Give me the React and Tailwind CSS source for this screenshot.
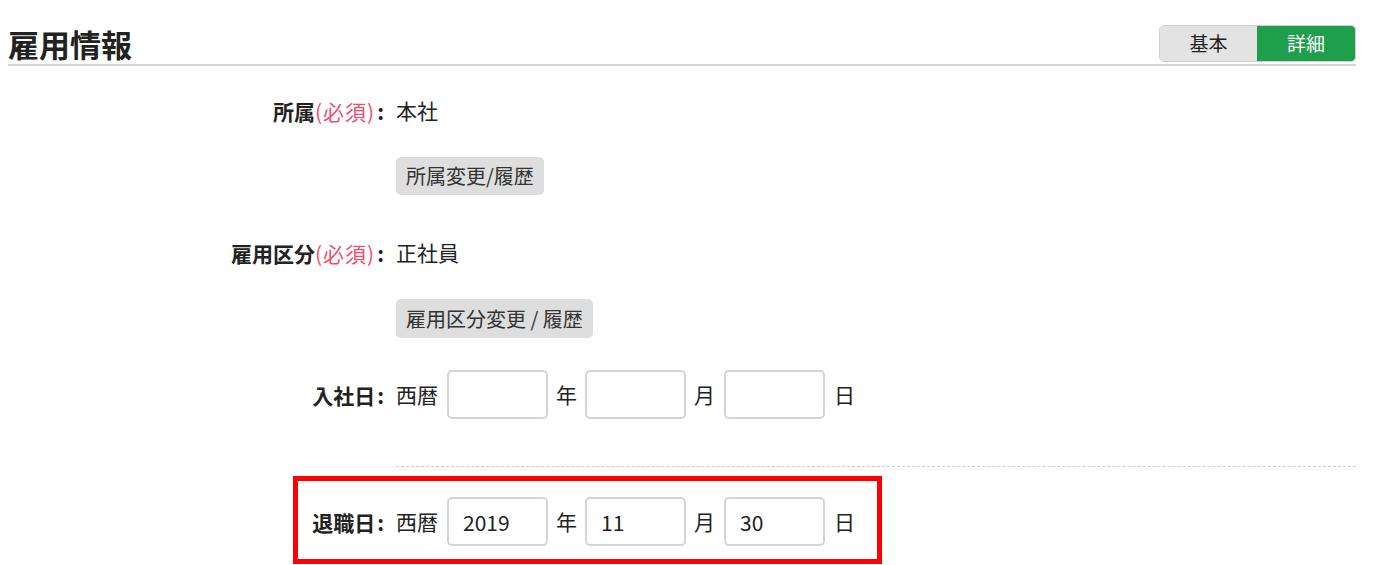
export default function App() {
  const font = { fontFamily: '"Noto Sans CJK JP", "Noto Sans", sans-serif' };
  const Label = ({ children, req }) => (
    <div className="w-[376px] shrink-0 text-right font-bold text-[21px] leading-[26px] text-[#222]">
      {children}
      {req && <span className="font-normal text-[#f0506e] tracking-[1px]">(必須)</span>}
      <span className="ml-[2px]">:</span>
    </div>
  );
  const Input = ({ value }) => (
    <input
      readOnly
      value={value || ""}
      className="w-[101px] h-[49px] rounded-[5px] border-2 border-[#d4d4d4] px-[14px] text-[21px] text-[#222] outline-none bg-white"
    />
  );
  const DateRow = ({ label, y, m, d }) => (
    <div className="flex items-center gap-3 h-[49px]">
      <Label>{label}</Label>
      <div className="flex items-center text-[21px] text-[#222]">
        <span className="mr-[9px]">西暦</span>
        <Input value={y} />
        <span className="mx-[8px]">年</span>
        <Input value={m} />
        <span className="ml-[8px] mr-[9px]">月</span>
        <Input value={d} />
        <span className="ml-[9px]">日</span>
      </div>
    </div>
  );
  return (
    <div style={font} className="w-[1390px] h-[565px] bg-white pl-2 pr-[34px] pt-[25px] overflow-hidden relative">
      <div className="flex items-end justify-between border-b-2 border-[#d6d6d6] pb-[2px]">
        <h1 className="text-[31px] font-bold leading-[37px] text-[#222]">雇用情報</h1>
        <div className="flex h-[37px] rounded-[5px] border border-[#cfcfcf] overflow-hidden text-[19px]">
          <div className="w-[97px] flex items-center justify-center bg-[#e3e3e3] text-[#222]">基本</div>
          <div className="w-[98px] flex items-center justify-center bg-[#1f9e4b] text-white">詳細</div>
        </div>
      </div>

      <div className="mt-[32px] flex items-center gap-3 h-[26px]">
        <Label req>所属</Label>
        <div className="text-[21px] text-[#222]">本社</div>
      </div>
      <div className="mt-[33px] ml-[388px]">
        <button className="h-[38px] px-[10px] rounded-[5px] bg-[#dedede] text-[20px] text-[#333]">所属変更/履歴</button>
      </div>

      <div className="mt-[45px] flex items-center gap-3 h-[26px]">
        <Label req>雇用区分</Label>
        <div className="text-[21px] text-[#222]">正社員</div>
      </div>
      <div className="mt-[33px] ml-[388px]">
        <button className="h-[39px] px-[10px] rounded-[5px] bg-[#dedede] text-[20px] text-[#333]">雇用区分変更 / 履歴</button>
      </div>

      <div className="mt-[32px]">
        <DateRow label="入社日" />
      </div>

      <div className="mt-[47px] ml-[388px] border-t border-dashed border-[#cccccc]" />

      <div className="mt-[30px]">
        <DateRow label="退職日" y="2019" m="11" d="30" />
      </div>

      <div className="absolute left-[293px] top-[476px] w-[589px] h-[88px] border-[5px] border-[#ff0000] pointer-events-none" />
    </div>
  );
}
